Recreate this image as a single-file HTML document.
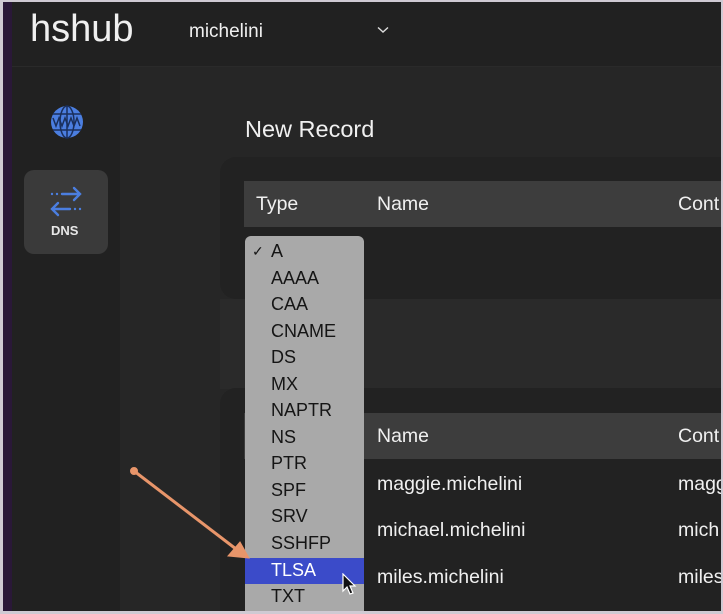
<!DOCTYPE html>
<html><head><meta charset="utf-8"><style>
*{margin:0;padding:0;box-sizing:border-box}
body{width:723px;height:614px;overflow:hidden;background:#cfcad3;font-family:"Liberation Sans",sans-serif;position:relative}
.abs{position:absolute}
#win{left:3px;top:2px;width:718px;height:609px;background:#262626;overflow:hidden}
#purple{left:0;top:0;width:9px;height:609px;background:#2a1838}
#hdr{left:9px;top:0;width:709px;height:65px;background:#212121;border-bottom:1px solid #2a2a2a}
#side{left:9px;top:65px;width:108px;height:544px;background:#212121}
.t{color:#f0f0f0;white-space:nowrap}
.r{font-size:19.5px}
.dd{color:#151515;font-size:18px;left:26px;position:absolute}
</style></head><body>
<div id="win" class="abs">
<div id="purple" class="abs"></div>
<div id="hdr" class="abs">
 <div class="abs t" style="left:18px;top:6px;font-size:38px;">hshub</div>
 <div class="abs t" style="left:177px;top:19px;font-size:19px;">michelini</div>
 <svg class="abs" style="left:365px;top:24px" width="12" height="8"><path d="M1 1.5L6 6L11 1.5" stroke="#ddd" stroke-width="1.4" fill="none"/></svg>
</div>
<div id="side" class="abs">
 <svg class="abs" style="left:38px;top:38px" width="34" height="34" viewBox="0 0 34 34"><circle cx="17" cy="17" r="16" fill="#4b7ee0"/><g stroke="#1a2f5c" stroke-width="1.5" fill="none"><ellipse cx="17" cy="17" rx="7" ry="16"/><line x1="17" y1="1" x2="17" y2="33"/><line x1="3" y1="9" x2="31" y2="9"/><line x1="3" y1="25" x2="31" y2="25"/><path d="M3 13l3 8 3-8 3 8 3-8 3 8 3-8 3 8 3-8 3 8"/></g></svg>
 <div class="abs" style="left:12px;top:103px;width:84px;height:84px;background:#3a3a3a;border-radius:10px"></div>
 <svg class="abs" style="left:36px;top:118px" width="36" height="36" viewBox="0 0 36 36"><g stroke="#4b7ee0" stroke-width="2.4" fill="none" stroke-linecap="round"><path d="M14 9H32M26 3l6 6-6 6"/><path d="M22 24H4M10 18l-6 6 6 6"/></g><g fill="#4b7ee0"><circle cx="4" cy="9" r="1.2"/><circle cx="9" cy="9" r="1.2"/><circle cx="27" cy="24" r="1.2"/><circle cx="32" cy="24" r="1.2"/></g></svg>
 <div class="abs t" style="left:39px;top:156px;font-size:13px;font-weight:bold;color:#e8e8e8">DNS</div>
</div>
<div class="abs t" style="left:242px;top:114px;font-size:23.5px;">New Record</div>
<div class="abs" style="left:217px;top:155px;width:520px;height:142px;background:#222;border-radius:16px"></div>
<div class="abs" style="left:241px;top:179px;width:480px;height:46px;background:#3d3d3d"></div>
<div class="abs t r" style="left:253px;top:191px;">Type</div>
<div class="abs t r" style="left:374px;top:191px;">Name</div>
<div class="abs t r" style="left:675px;top:191px;">Cont</div>
<div class="abs" style="left:217px;top:297px;width:520px;height:90px;background:#2a2a2a"></div>
<div class="abs" style="left:217px;top:386px;width:520px;height:240px;background:#222;border-radius:16px"></div>
<div class="abs" style="left:241px;top:411px;width:480px;height:46px;background:#3d3d3d"></div>
<div class="abs t r" style="left:374px;top:423px;">Name</div>
<div class="abs t r" style="left:675px;top:423px;">Cont</div>
<div class="abs t r" style="left:374px;top:471px;">maggie.michelini</div>
<div class="abs t r" style="left:675px;top:471px;">magg</div>
<div class="abs t r" style="left:374px;top:517px;">michael.michelini</div>
<div class="abs t r" style="left:675px;top:517px;">mich</div>
<div class="abs t r" style="left:374px;top:564px;">miles.michelini</div>
<div class="abs t r" style="left:675px;top:564px;">miles</div>
<div class="abs" style="left:242px;top:234px;width:119px;height:390px;background:#a9a9a9;border-radius:6px;overflow:hidden">
 <div class="abs" style="left:0;top:322px;width:119px;height:26px;background:#3b4bc9"></div>
 <div class="dd" style="left:7px;top:7px;font-size:14px">✓</div>
 <div class="dd" style="top:5px">A</div>
 <div class="dd" style="top:32px">AAAA</div>
 <div class="dd" style="top:58px">CAA</div>
 <div class="dd" style="top:85px">CNAME</div>
 <div class="dd" style="top:111px">DS</div>
 <div class="dd" style="top:138px">MX</div>
 <div class="dd" style="top:164px">NAPTR</div>
 <div class="dd" style="top:191px">NS</div>
 <div class="dd" style="top:217px">PTR</div>
 <div class="dd" style="top:244px">SPF</div>
 <div class="dd" style="top:270px">SRV</div>
 <div class="dd" style="top:297px">SSHFP</div>
 <div class="dd" style="top:324px;color:#fff">TLSA</div>
 <div class="dd" style="top:350px">TXT</div>
</div>
<svg class="abs" style="left:338px;top:571px" width="16" height="24" viewBox="0 0 16 24"><path d="M2 1V18L6 14L9 21L12 20L9 13H14Z" fill="#111" stroke="#fff" stroke-width="1.2"/></svg>
</div>
<svg class="abs" style="left:0;top:0" width="723" height="614"><g fill="#e8956a" stroke="#e8956a"><circle cx="134" cy="471" r="3.5"/><line x1="134" y1="471" x2="236" y2="549" stroke-width="3"/><path d="M249 558L228 556L240 542Z" stroke-width="1"/></g></svg>
</body></html>
